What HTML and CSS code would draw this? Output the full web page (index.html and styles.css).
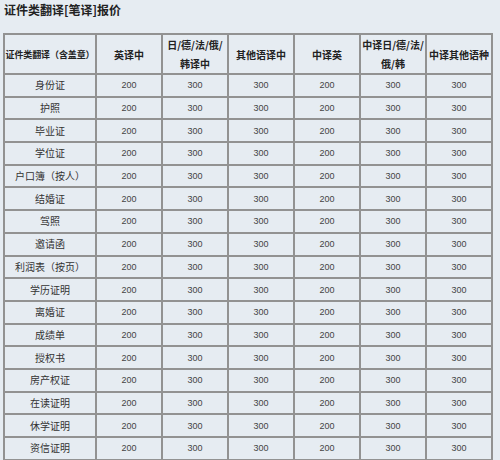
FILE: index.html
```html
<!DOCTYPE html>
<html lang="zh">
<head>
<meta charset="utf-8">
<title>证件类翻译报价</title>
<link rel="stylesheet" href="styles.css">
</head>
<body>
<h1 class="title">证件类翻译[笔译]报价</h1>
<table class="price">
  <colgroup>
    <col class="c1"><col class="cn"><col class="cn"><col class="cn"><col class="cn"><col class="cn"><col class="cn">
  </colgroup>
  <thead>
    <tr>
      <th class="wide">证件类翻译（含盖章）</th>
      <th>英译中</th>
      <th>日/德/法/俄/<br>韩译中</th>
      <th>其他语译中</th>
      <th>中译英</th>
      <th>中译日/德/法/<br>俄/韩</th>
      <th>中译其他语种</th>
    </tr>
  </thead>
  <tbody>
    <tr><td class="name">身份证</td><td>200</td><td>300</td><td>300</td><td>200</td><td>300</td><td>300</td></tr>
    <tr><td class="name">护照</td><td>200</td><td>300</td><td>300</td><td>200</td><td>300</td><td>300</td></tr>
    <tr><td class="name">毕业证</td><td>200</td><td>300</td><td>300</td><td>200</td><td>300</td><td>300</td></tr>
    <tr><td class="name">学位证</td><td>200</td><td>300</td><td>300</td><td>200</td><td>300</td><td>300</td></tr>
    <tr><td class="name">户口簿（按人）</td><td>200</td><td>300</td><td>300</td><td>200</td><td>300</td><td>300</td></tr>
    <tr><td class="name">结婚证</td><td>200</td><td>300</td><td>300</td><td>200</td><td>300</td><td>300</td></tr>
    <tr><td class="name">驾照</td><td>200</td><td>300</td><td>300</td><td>200</td><td>300</td><td>300</td></tr>
    <tr><td class="name">邀请函</td><td>200</td><td>300</td><td>300</td><td>200</td><td>300</td><td>300</td></tr>
    <tr><td class="name">利润表（按页）</td><td>200</td><td>300</td><td>300</td><td>200</td><td>300</td><td>300</td></tr>
    <tr><td class="name">学历证明</td><td>200</td><td>300</td><td>300</td><td>200</td><td>300</td><td>300</td></tr>
    <tr><td class="name">离婚证</td><td>200</td><td>300</td><td>300</td><td>200</td><td>300</td><td>300</td></tr>
    <tr><td class="name">成绩单</td><td>200</td><td>300</td><td>300</td><td>200</td><td>300</td><td>300</td></tr>
    <tr><td class="name">授权书</td><td>200</td><td>300</td><td>300</td><td>200</td><td>300</td><td>300</td></tr>
    <tr><td class="name">房产权证</td><td>200</td><td>300</td><td>300</td><td>200</td><td>300</td><td>300</td></tr>
    <tr><td class="name">在读证明</td><td>200</td><td>300</td><td>300</td><td>200</td><td>300</td><td>300</td></tr>
    <tr><td class="name">休学证明</td><td>200</td><td>300</td><td>300</td><td>200</td><td>300</td><td>300</td></tr>
    <tr><td class="name">资信证明</td><td>200</td><td>300</td><td>300</td><td>200</td><td>300</td><td>300</td></tr>
  </tbody>
</table>
</body>
</html>
```

FILE: styles.css
```css
html, body {
  margin: 0;
  padding: 0;
  background: #e6ecf2;
}
body {
  padding: 3px 0 0 3px;
  font-family: "Liberation Sans", "Noto Sans CJK SC", sans-serif;
  color: #333;
}
.title {
  margin: 0 0 16px 1px;
  font-size: 12px;
  line-height: 14px;
  font-weight: bold;
  color: #222;
  font-family: "Noto Sans CJK SC", sans-serif;
}
.price {
  border-collapse: collapse;
  table-layout: fixed;
  width: 490px;
  border: 2px solid #929292;
}
.c1 { width: 92px; }
.cn { width: 66px; }
.price th, .price td {
  border: 2px solid #929292;
  padding: 0;
  text-align: center;
  vertical-align: middle;
  overflow: hidden;
  white-space: nowrap;
}
.price th {
  height: 38px;
  font-family: "Noto Sans CJK SC", sans-serif;
  font-size: 10px;
  line-height: 19px;
  font-weight: bold;
  color: #222;
}
.price th.wide {
  font-size: 9px;
  letter-spacing: -0.1px;
}
.price td {
  height: 20.7px;
  font-size: 9px;
  line-height: 12px;
  color: #444;
}
.price td.name {
  font-family: "Noto Sans CJK SC", sans-serif;
  font-size: 10px;
  color: #333;
}
```
